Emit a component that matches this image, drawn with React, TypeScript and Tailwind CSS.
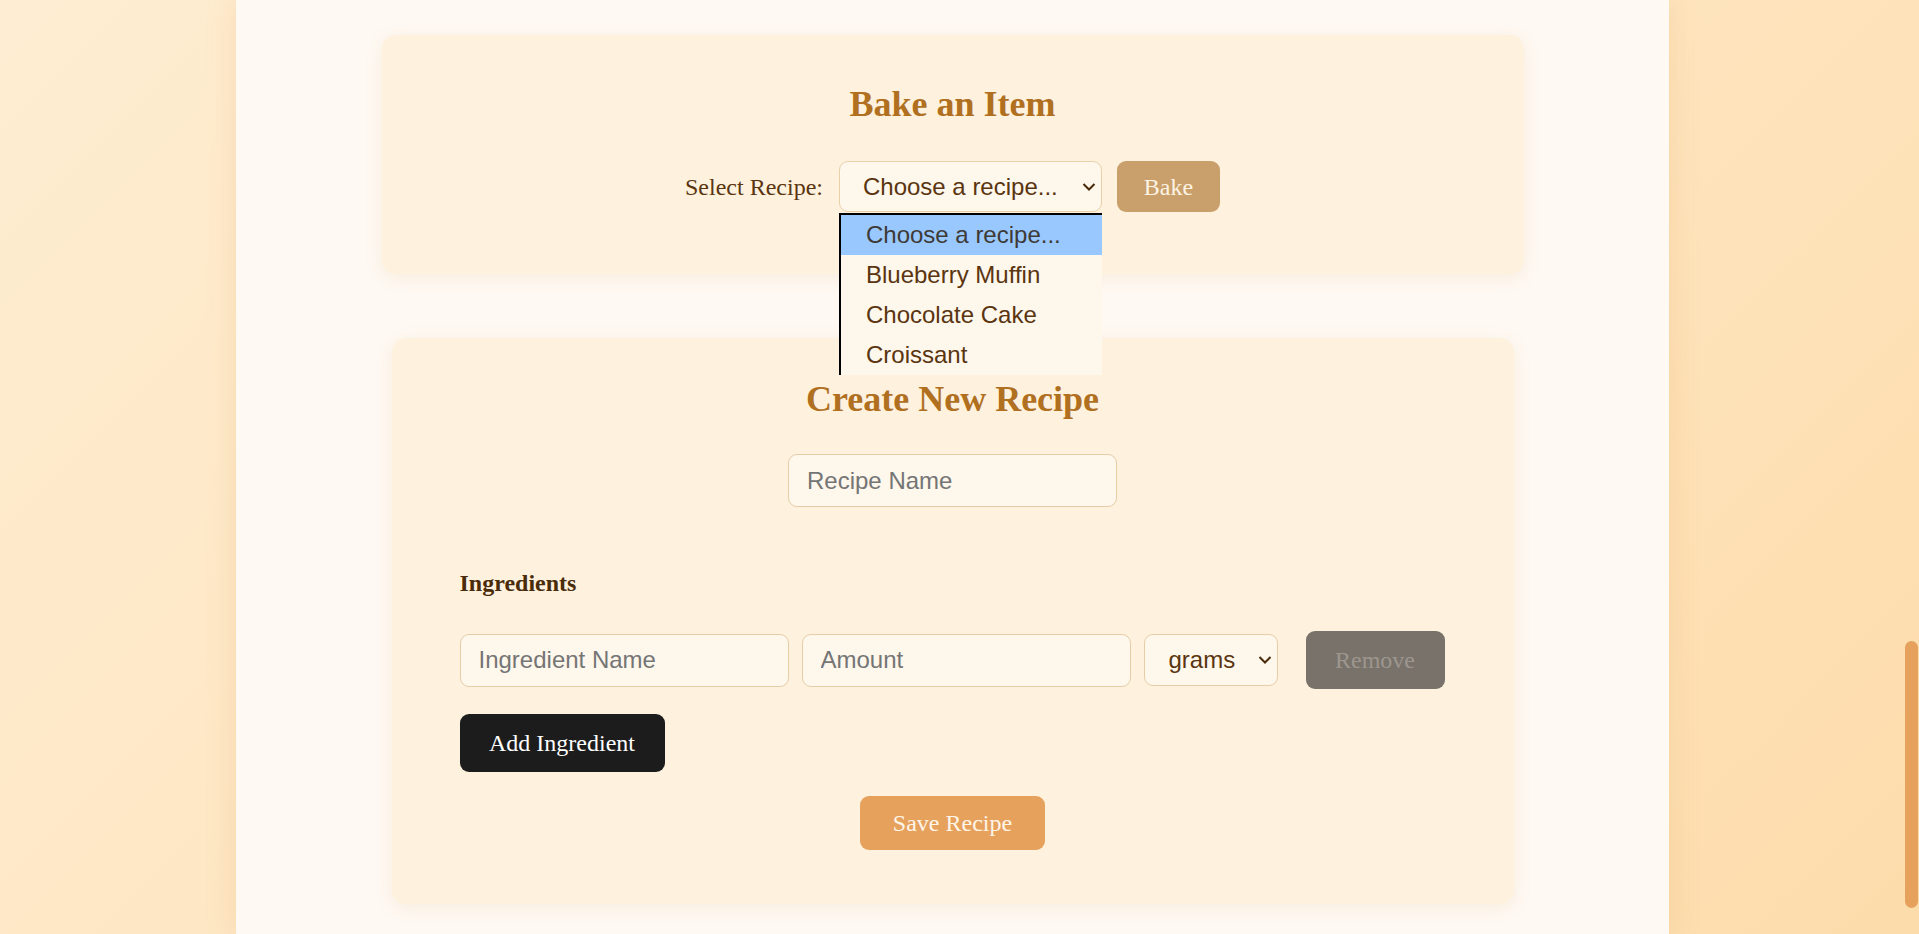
import { useState } from 'react';

const recipes = ['Choose a recipe...', 'Blueberry Muffin', 'Chocolate Cake', 'Croissant'];

function Chevron() {
  return (
    <svg width="14" height="9" viewBox="0 0 14 9" className="pointer-events-none absolute right-[6px] top-1/2 -translate-y-1/2">
      <path d="M1.5 1.5 L7 7 L12.5 1.5" fill="none" stroke="#4a2a08" strokeWidth="2" />
    </svg>
  );
}

export default function App() {
  const [recipe, setRecipe] = useState('');
  const [name, setName] = useState('');

  return (
    <div className="flex h-[934px] overflow-hidden bg-[linear-gradient(135deg,#feedd2,#fee4bd_60%,#fddcab)] font-['Liberation_Serif',serif] text-[#5a3510]">
      <div className="flex flex-1 justify-center">
        <div className="w-[1433px] bg-[#fef9f3] pt-[35px] shadow-[0_0_28px_rgba(225,160,80,0.22)]">
          {/* bake card */}
          <div className="mx-auto w-[1142px] rounded-[14px] bg-[#fef2df] pt-[49px] pb-[62px] shadow-[0_4px_18px_rgba(210,150,70,0.12)]">
            <h2 className="text-center text-[36px] font-bold leading-[41px] text-[#b0701f]">Bake an Item</h2>
            <div className="mt-[36px] flex items-center justify-center">
              <label className="text-[24px] leading-[28px]">Select Recipe:</label>
              <div className="relative ml-[16px]">
                <select
                  value={recipe}
                  onChange={(e) => setRecipe(e.target.value)}
                  className="h-[51px] w-[263px] appearance-none rounded-[9px] border border-[#e8d0aa] bg-[#fef7ec] pl-[23px] font-['Liberation_Sans',sans-serif] text-[24px] text-[#5a3510] outline-none"
                >
                  {recipes.map((r, i) => (
                    <option key={r} value={i === 0 ? '' : r}>
                      {r}
                    </option>
                  ))}
                </select>
                <Chevron />
                <div className="absolute left-0 top-[52px] z-10 w-[263px] border-l-2 border-t-2 border-black bg-[#fef7ec] font-['Liberation_Sans',sans-serif] text-[24px]">
                  {recipes.map((r, i) => (
                    <div
                      key={r}
                      className={
                        i === 0
                          ? 'flex h-[40px] items-center bg-[#99c8ff] pl-[25px] text-[#3e3a36]'
                          : 'flex h-[40px] items-center pl-[25px] text-[#5a3510]'
                      }
                    >
                      {r}
                    </div>
                  ))}
                </div>
              </div>
              <button className="ml-[15px] h-[51px] w-[103px] rounded-[9px] bg-[#c9a06b] text-[24px] text-[#fdf3e3]">Bake</button>
            </div>
          </div>

          {/* create card */}
          <div className="mx-auto mt-[64px] w-[1122px] rounded-[14px] bg-[#fef2df] pt-[41px] pb-[54px] shadow-[0_4px_18px_rgba(210,150,70,0.12)]">
            <h2 className="text-center text-[36px] font-bold leading-[41px] text-[#b0701f]">Create New Recipe</h2>
            <div className="mt-[34px] flex justify-center">
              <input
                value={name}
                onChange={(e) => setName(e.target.value)}
                placeholder="Recipe Name"
                className="h-[53px] w-[329px] rounded-[9px] border border-[#e6cda7] bg-[#fef7ec] pl-[18px] font-['Liberation_Sans',sans-serif] text-[24px] text-[#5a3510] outline-none placeholder:text-[#757575]"
              />
            </div>

            <div className="px-[68px]">
              <h4 className="mt-[62px] text-[24px] font-bold leading-[28px] text-[#4a2c0a]">Ingredients</h4>
              <div className="mt-[34px] flex items-center">
                <input
                  placeholder="Ingredient Name"
                  className="h-[53px] w-[329px] rounded-[9px] border border-[#e6cda7] bg-[#fef7ec] pl-[18px] font-['Liberation_Sans',sans-serif] text-[24px] outline-none placeholder:text-[#757575]"
                />
                <input
                  placeholder="Amount"
                  className="ml-[13px] h-[53px] w-[329px] rounded-[9px] border border-[#e6cda7] bg-[#fef7ec] pl-[18px] font-['Liberation_Sans',sans-serif] text-[24px] outline-none placeholder:text-[#757575]"
                />
                <div className="relative ml-[13px]">
                  <select className="h-[52px] w-[134px] appearance-none rounded-[9px] border border-[#e6cda7] bg-[#fef7ec] pl-[24px] font-['Liberation_Sans',sans-serif] text-[24px] text-[#5a3510] outline-none">
                    <option>grams</option>
                    <option>cups</option>
                    <option>pieces</option>
                  </select>
                  <Chevron />
                </div>
                <button disabled className="ml-[28px] h-[58px] w-[139px] rounded-[9px] bg-[#78726b] text-[24px] text-[#9d968e]">
                  Remove
                </button>
              </div>
              <button className="mt-[25px] h-[58px] w-[205px] rounded-[9px] bg-[#1c1c1c] text-[24px] text-white">Add Ingredient</button>
              <div className="mt-[24px] flex justify-center">
                <button className="h-[54px] w-[185px] rounded-[9px] bg-[#e6a15c] text-[24px] text-[#fef5e8]">Save Recipe</button>
              </div>
            </div>
          </div>
        </div>
      </div>

      {/* scrollbar */}
      <div className="w-[14px] pt-[641px]">
        <div className="h-[267px] w-[13px] rounded-full bg-[#e6a15c]" />
      </div>
    </div>
  );
}
